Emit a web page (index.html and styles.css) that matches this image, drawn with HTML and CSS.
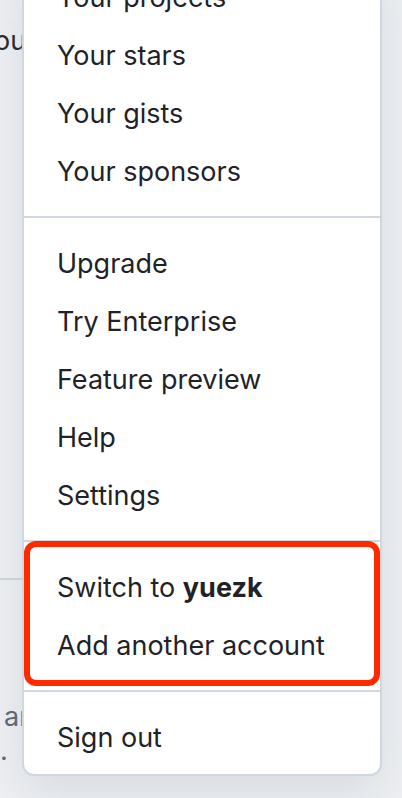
FILE: index.html
```html
<!DOCTYPE html>
<html>
<head>
<meta charset="utf-8">
<link rel="stylesheet" href="styles.css">
</head>
<body>
<div class="page">
  <div class="bg-content">
    <div class="bg-text bg-top">ou</div>
    <div class="bg-rule"></div>
    <div class="bg-text bg-muted bg-ar">ar</div>
    <div class="bg-text bg-muted bg-dot">.</div>
  </div>
  <div class="menu">
    <div class="group">
      <div class="item">Your projects</div>
      <div class="item">Your stars</div>
      <div class="item">Your gists</div>
      <div class="item">Your sponsors</div>
    </div>
    <div class="divider"></div>
    <div class="group">
      <div class="item">Upgrade</div>
      <div class="item">Try Enterprise</div>
      <div class="item">Feature preview</div>
      <div class="item">Help</div>
      <div class="item">Settings</div>
    </div>
    <div class="divider"></div>
    <div class="group accounts">
      <div class="item">Switch to <strong>yuezk</strong></div>
      <div class="item">Add another account</div>
      <div class="highlight"></div>
    </div>
    <div class="divider"></div>
    <div class="group">
      <div class="item">Sign out</div>
    </div>
  </div>
</div>
</body>
</html>
```

FILE: styles.css
```css
html, body {
  margin: 0;
  padding: 0;
}
body {
  width: 402px;
  height: 798px;
  overflow: hidden;
  background: #eff1f4;
  font-family: Inter, "Noto Sans", sans-serif;
  color: #1f2328;
}
.page {
  position: relative;
  width: 402px;
  height: 798px;
}
.bg-content {
  display: flex;
  flex-direction: column;
  width: 22px;
  overflow: hidden;
}
.bg-text {
  font-size: 27px;
  line-height: 34px;
  white-space: nowrap;
}
.bg-top {
  margin-top: 24px;
  margin-left: -6px;
}
.bg-rule {
  margin-top: 520px;
  height: 2px;
  background: #d0d7de;
}
.bg-muted {
  color: #59636e;
}
.bg-ar {
  margin-top: 120px;
  margin-left: 4px;
}
.bg-dot {
  margin-top: 0;
  margin-left: 0;
}
.menu {
  position: absolute;
  left: 22px;
  top: -42px;
  width: 356px;
  border: 2px solid #d0d7de;
  border-radius: 0 0 12px 12px;
  background: #ffffff;
  padding: 8px 0;
  box-shadow: 0 16px 48px rgba(140, 149, 159, 0.25);
}
.group {
  display: flex;
  flex-direction: column;
}
.accounts {
  position: relative;
}
.item {
  height: 58px;
  display: flex;
  align-items: center;
  padding-left: 33px;
  font-size: 27px;
  white-space: nowrap;
}
.item strong {
  font-weight: 700;
  margin-left: 0.28em;
}
.divider {
  height: 2px;
  margin: 16px 0;
  background: #d0d7de;
}
.highlight {
  position: absolute;
  left: 0;
  right: 0;
  top: -17px;
  bottom: -12px;
  border: 6px solid #ff2a00;
  border-radius: 12px;
}
```
